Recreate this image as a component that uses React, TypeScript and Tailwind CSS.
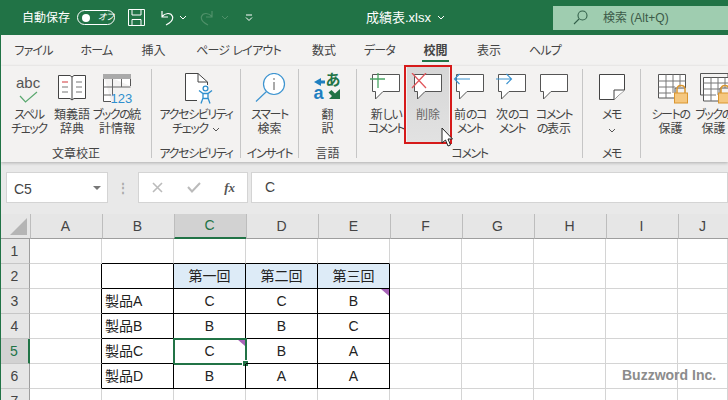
import type { ReactNode } from "react"

const uiFont = "[font-family:'Liberation_Sans','Noto_Sans_CJK_JP',sans-serif] [font-feature-settings:'palt']"

// カナだけ詰める（Meiryo UI の幅に寄せる）
function Label({ text, tight = "tracking-[-1.4px]" }: { text: string; tight?: string }) {
  return (
    <>
      {text.split(/([ァ-ヶーぁ-ん]+)/).map((part, i) =>
        i % 2 ? (
          <span key={i} className={tight}>
            {part}
          </span>
        ) : (
          part
        ),
      )}
    </>
  )
}

function Bubble({ children }: { children?: ReactNode }) {
  return (
    <svg width="36" height="32" viewBox="0 0 36 32" fill="none">
      <path d="M4.5 1.5H31.5V18.5H15L7.5 26V18.5H4.5Z" fill="#fff" stroke="#555" strokeWidth="1" />
      {children}
    </svg>
  )
}

const icons: Record<string, ReactNode> = {
  spell: (
    <div className="relative h-[32px] w-[36px]">
      <span className="absolute top-[-1px] left-[5px] text-[15px] text-[#555]">abc</span>
      <svg className="absolute top-[18px] left-[8px]" width="20" height="12" viewBox="0 0 20 12" fill="none">
        <path d="M1 5L6.5 11L18 1" stroke="#5aa86f" strokeWidth="1.2" />
      </svg>
    </div>
  ),
  book: (
    <svg width="32" height="32" viewBox="0 0 32 32" fill="none">
      <path d="M2.5 2.5H14L16 4L18 2.5H29.5V25.5H18L16 27L14 25.5H2.5Z" fill="#fff" stroke="#444" />
      <path d="M16 4V27" stroke="#444" />
      <path d="M6 9H12" stroke="#d13438" />
      <path d="M6 14H12M6 19H12M20 9H26M20 14H26M20 19H26" stroke="#777" />
    </svg>
  ),
  stats: (
    <svg width="32" height="32" viewBox="0 0 32 32" fill="none">
      <path d="M2.5 1.5H29.5V13M2.5 1.5V28.5H10" stroke="#555" fill="#fff" />
      <rect x="2" y="1" width="28" height="5" fill="#aaa" />
      <path d="M11.5 6V22M20.5 6V14M2.5 14H29.5M2.5 22H10" stroke="#666" />
      <text x="9.5" y="30" fontSize="13" fill="#2f8fce" fontFamily="Liberation Sans">123</text>
    </svg>
  ),
  access: (
    <svg width="36" height="32" viewBox="0 0 36 32" fill="none">
      <path d="M7.5 0.5H20L29.5 9V27.5H7.5Z" fill="#fff" />
      <path d="M29.5 12V9L20 0.5H7.5V27.5H19M20 0.5V9H29.5" stroke="#444" />
      <circle cx="27.5" cy="15.5" r="2.4" fill="#fff" stroke="#2f8fce" strokeWidth="1.3" />
      <path d="M21 17.5L25 20.5H30L34 17.5M25 20.5V25L23 30.5M30 20.5V25L32 30.5M25 25.5H30" stroke="#2f8fce" strokeWidth="1.3" />
    </svg>
  ),
  smart: (
    <svg width="36" height="32" viewBox="0 0 36 32" fill="none">
      <circle cx="22" cy="11" r="10.5" fill="#fff" stroke="#3d94d0" strokeWidth="1.2" />
      <path d="M14.5 18.5L4 28.5" stroke="#3d94d0" strokeWidth="1.2" />
      <path d="M22 9V17" stroke="#555" />
      <circle cx="22" cy="6" r="0.8" fill="#555" />
    </svg>
  ),
  translate: (
    <div className="relative h-[32px] w-[32px]">
      <span className="absolute top-[10px] left-[2px] text-[18px] leading-[20px] font-bold text-[#1f7fc0]">a</span>
      <span className="absolute top-[-3px] left-[14px] text-[15px] leading-[20px] font-bold text-[#217346]">あ</span>
      <svg className="absolute top-0 left-0" width="32" height="32" viewBox="0 0 32 32">
        <path d="M2 9L9 5V7.5H13V10.5H9V13Z" fill="#1f7fc0" />
        <path d="M28 26H17L20 23L16.5 19.5L19.5 17L23 20.5L28 16Z" fill="#217346" />
      </svg>
    </div>
  ),
  add: (
    <Bubble>
      <path d="M2 6H17M10 0V15" stroke="#4aa564" strokeWidth="1.3" />
    </Bubble>
  ),
  remove: (
    <Bubble>
      <path d="M2 0L16 15M16 0L2 15" stroke="#e0565b" strokeWidth="1.3" />
    </Bubble>
  ),
  prev: (
    <Bubble>
      <path d="M2 6H18M7.5 1L2.5 6L7.5 11" stroke="#3d94d0" strokeWidth="1.2" />
    </Bubble>
  ),
  next: (
    <Bubble>
      <path d="M2 6H18M12.5 1L17.5 6L12.5 11" stroke="#3d94d0" strokeWidth="1.2" />
    </Bubble>
  ),
  show: <Bubble />,
  memo: (
    <svg width="30" height="30" viewBox="0 0 30 30" fill="none">
      <path d="M2.5 1.5H27.5V17L17 26.5H2.5Z" fill="#fff" stroke="#444" />
      <path d="M27.5 17H17V26.5" stroke="#444" fill="#fff" />
    </svg>
  ),
  sheet: (
    <svg width="36" height="32" viewBox="0 0 36 32" fill="none">
      <g transform="translate(4 0)">
        <path d="M1.5 1.5H28.5V15H18V25H1.5Z" fill="#fff" stroke="#555" />
        <path d="M1.5 8H28.5M1.5 14H18M1.5 20H14M9 1.5V25M16 1.5V20M23 1.5V14" stroke="#777" />
      </g>
      <g transform="translate(4 2)">
        <path d="M20 18V14.5C20 9 28 9 28 14.5V18" stroke="#d9952f" strokeWidth="1.5" />
        <rect x="17.5" y="18" width="13" height="10" fill="#f5c77e" stroke="#d9952f" />
      </g>
    </svg>
  ),
  workbook: (
    <svg width="36" height="32" viewBox="0 0 36 32" fill="none">
      <g transform="translate(3 0)">
        <path d="M1.5 0.5H29V4M1.5 0.5V22H4" stroke="#555" />
        <path d="M4.5 4.5H31.5V15H21V28H4.5Z" fill="#fff" stroke="#555" />
        <path d="M4.5 10H31.5M4.5 16H21M4.5 22H17M12 4.5V28M19 4.5V22M26 4.5V15" stroke="#777" />
      </g>
      <g transform="translate(3 2)">
        <path d="M22 18V14.5C22 9 30 9 30 14.5V18" stroke="#d9952f" strokeWidth="1.5" />
        <rect x="19.5" y="18" width="13" height="10" fill="#f5c77e" stroke="#d9952f" />
      </g>
    </svg>
  ),
}

function RibbonButton({ icon, lines, width, active }: { icon: string; lines: ReactNode[]; width: string; active?: boolean }) {
  return (
    <div className={`flex h-[77px] flex-none flex-col items-center ${width} ${active ? "bg-gradient-to-b from-[#d6d6d6] to-[#e2e2e2]" : ""}`}>
      <div className="mt-[7px] flex h-[33px] items-start justify-center">{icons[icon]}</div>
      <div className={`mt-[2px] text-center text-[12px] leading-[14px] whitespace-nowrap ${active ? "text-[#666]" : "text-[#444]"}`}>
        {lines.map((l, i) => (
          <div key={i}>{typeof l === "string" ? <Label text={l} /> : l}</div>
        ))}
      </div>
    </div>
  )
}

function Group({ label, width, children }: { label: string; width: string; children: ReactNode }) {
  return (
    <div className={`flex h-[96px] flex-none flex-col ${width}`}>
      <div className="flex h-[77px] justify-center">{children}</div>
      <div className="mt-[4px] text-center text-[12px] leading-[14px] whitespace-nowrap text-[#444]">
        <Label text={label} />
      </div>
    </div>
  )
}

const Divider = () => <div className="mt-[3px] h-[89px] w-px flex-none bg-[#c6c6c6]" />

const Chevron = ({ color = "#555" }: { color?: string }) => (
  <svg width="8" height="5" viewBox="0 0 8 5" fill="none">
    <path d="M1 1L4 4L7 1" stroke={color} />
  </svg>
)

const tabs = [
  { name: "ファイル", w: "w-[65px]" },
  { name: "ホーム", w: "w-[61px]" },
  { name: "挿入", w: "w-[53px]" },
  { name: "ページ レイアウト", w: "w-[117px]" },
  { name: "数式", w: "w-[54px]" },
  { name: "データ", w: "w-[57px]" },
  { name: "校閲", w: "w-[55px]" },
  { name: "表示", w: "w-[52px]" },
  { name: "ヘルプ", w: "w-[60px]" },
]

function TitleBar() {
  return (
    <div className="flex h-[35px] items-center bg-[#217346] text-white">
      <span className="ml-[21px] w-[50px] text-[12px] whitespace-nowrap">自動保存</span>
      <div className="ml-[5px] flex h-[15px] w-[38px] items-center rounded-full border border-white pl-[4px]">
        <span className="h-[8px] w-[8px] rounded-full bg-white" />
        <span className="ml-[8px] text-[9px] italic">オフ</span>
      </div>
      <svg className="ml-[13px]" width="17" height="17" viewBox="0 0 17 17" fill="none" stroke="#fff">
        <path d="M0.5 0.5H16.5V16.5H0.5Z M4 0.5V6H13V0.5 M4 16.5V10.5H13V16.5" />
      </svg>
      <svg className="ml-[13px]" width="16" height="16" viewBox="0 0 16 16" fill="none" stroke="#fff" strokeWidth="1.2">
        <path d="M4 1V7H10M4 6.5C7 3 13 2 14.5 6.5C15.5 10 12 13 8 15" />
      </svg>
      <div className="ml-[5px]"><Chevron color="#fff" /></div>
      <svg className="ml-[13px]" width="16" height="16" viewBox="0 0 16 16" fill="none" stroke="#4f9069" strokeWidth="1.2">
        <path d="M12 1V7H6M12 6.5C9 3 3 2 1.5 6.5C0.5 10 4 13 8 15" />
      </svg>
      <div className="ml-[5px]"><Chevron color="#4f9069" /></div>
      <svg className="ml-[16px]" width="8" height="8" viewBox="0 0 8 8" fill="none" stroke="#fff">
        <path d="M1 1H7M1 3.5L4 6.5L7 3.5" />
      </svg>
      <span className="ml-[113px] text-[13px] whitespace-nowrap">成績表.xlsx</span>
      <div className="ml-[6px]"><Chevron color="#fff" /></div>
      <div className="ml-[108px] flex h-[24px] flex-1 items-center bg-[#9fcdb0] text-[#3c5a48]">
        <svg className="ml-[20px]" width="15" height="15" viewBox="0 0 15 15" fill="none" stroke="#33604a" strokeWidth="1.1">
          <circle cx="9.5" cy="5.5" r="4.5" />
          <path d="M6 9L1 14" />
        </svg>
        <span className="ml-[15px] text-[12px] whitespace-nowrap">検索 (Alt+Q)</span>
      </div>
    </div>
  )
}

function Tabs() {
  return (
    <div className="flex h-[31px] items-start bg-[#f3f2f1] pt-[8px] text-[12px] text-[#444]">
      {tabs.map((t) => (
        <div key={t.name} className={`flex flex-none flex-col items-center ${t.w}`}>
          <span className={`leading-[16px] whitespace-pre ${t.name === "校閲" ? "font-bold" : ""}`}>
            <Label text={t.name} tight="tracking-[-0.8px]" />
          </span>
          {t.name === "校閲" && <span className="mt-[1px] h-[2px] w-[27px] bg-[#217346]" />}
        </div>
      ))}
    </div>
  )
}

function Ribbon() {
  return (
    <div className="relative flex h-[96px] items-start overflow-hidden bg-[#f3f2f1] shadow-[0_1px_3px_rgba(0,0,0,0.25)]">
      <Group label="文章校正" width="w-[150px]">
        <div className="flex w-full pl-[7px]">
          <RibbonButton icon="spell" lines={["スペル", "チェック"]} width="w-[42px]" />
          <RibbonButton icon="book" lines={["類義語", "辞典"]} width="w-[44px]" />
          <RibbonButton icon="stats" lines={["ブックの統", "計情報"]} width="w-[46px]" />
        </div>
      </Group>
      <Divider />
      <Group label="アクセシビリティ" width="w-[88px]">
        <RibbonButton
          icon="access"
          lines={[
            "アクセシビリティ",
            <span className="inline-flex items-center gap-[4px]">
              <Label text="チェック" />
              <Chevron />
            </span>,
          ]}
          width="w-[88px]"
        />
      </Group>
      <Divider />
      <Group label="インサイト" width="w-[57px]">
        <RibbonButton icon="smart" lines={["スマート", "検索"]} width="w-[57px]" />
      </Group>
      <Divider />
      <Group label="言語" width="w-[57px]">
        <RibbonButton icon="translate" lines={["翻", "訳"]} width="w-[57px]" />
      </Group>
      <Divider />
      <Group label="コメント" width="w-[225px]">
        <div className="flex w-full pl-[8px]">
          <RibbonButton icon="add" lines={["新しい", "コメント"]} width="w-[42px]" />
          <RibbonButton icon="remove" lines={["削除"]} width="w-[42px]" active />
          <RibbonButton icon="prev" lines={["前のコ", "メント"]} width="w-[42px]" />
          <RibbonButton icon="next" lines={["次のコ", "メント"]} width="w-[42px]" />
          <RibbonButton icon="show" lines={["コメント", "の表示"]} width="w-[42px]" />
        </div>
      </Group>
      <Divider />
      <Group label="メモ" width="w-[57px]">
        <RibbonButton icon="memo" lines={["メモ", <span className="inline-flex"><Chevron /></span>]} width="w-[57px]" />
      </Group>
      <Divider />
      <div className="flex flex-none pl-[8px]">
        <RibbonButton icon="sheet" lines={["シートの", "保護"]} width="w-[43px]" />
        <RibbonButton icon="workbook" lines={["ブックの", "保護"]} width="w-[43px]" />
      </div>
    </div>
  )
}

function FormulaBar() {
  return (
    <div className="flex h-[52px] items-start bg-[#e9e9e9] pt-[10px]">
      <div className="ml-[5px] flex h-[31px] w-[102px] flex-none items-center justify-between border border-[#d4d4d4] bg-white pr-[6px] pl-[7px] text-[14px] text-[#444]">
        <span className="mt-[3px]">C5</span>
        <span className="h-0 w-0 border-x-[4px] border-t-[4px] border-x-transparent border-t-[#777]" />
      </div>
      <div className="flex h-[31px] w-[30px] flex-none items-center justify-center text-[12px] leading-none font-bold text-[#aaa]">⋮</div>
      <div className="flex h-[31px] w-[110px] flex-none items-center justify-between border border-[#d4d4d4] bg-white pr-[12px] pl-[13px]">
        <svg width="11" height="11" viewBox="0 0 11 11" fill="none" stroke="#bbb" strokeWidth="1.6"><path d="M1 1L10 10M10 1L1 10" /></svg>
        <svg width="14" height="11" viewBox="0 0 14 11" fill="none" stroke="#bbb" strokeWidth="2"><path d="M1 5L5 9.5L13 1" /></svg>
        <span className="[font-family:'Liberation_Serif',serif] text-[13px] font-bold text-[#555] italic">fx</span>
      </div>
      <div className="ml-[3px] flex h-[31px] flex-1 items-center border border-[#d4d4d4] bg-white pl-[13px] text-[14px] text-[#444]">C</div>
    </div>
  )
}

const columns = ["A", "B", "C", "D", "E", "F", "G", "H", "I", "J"]
const cells: Record<string, string> = {
  C2: "第一回", D2: "第二回", E2: "第三回",
  B3: "製品A", C3: "C", D3: "C", E3: "B",
  B4: "製品B", C4: "B", D4: "B", E4: "C",
  B5: "製品C", C5: "C", D5: "B", E5: "A",
  B6: "製品D", C6: "B", D6: "A", E6: "A",
}

function Note() {
  return (
    <svg className="absolute top-0 right-0" width="8" height="7" viewBox="0 0 8 7">
      <path d="M0 0H8V7Z" fill="#a864b8" />
    </svg>
  )
}

function Sheet() {
  const rows = [1, 2, 3, 4, 5, 6, 7]
  return (
    <div className="relative grid grid-cols-[29px_repeat(9,72px)_1fr] grid-rows-[25px_repeat(7,25px)] bg-white text-[14px] text-[#222]">
      <div className="relative border-b border-[#9e9e9e] bg-[#e6e6e6]">
        <svg className="absolute top-[4px] right-[3px]" width="17" height="17" viewBox="0 0 17 17">
          <path d="M17 0V17H0Z" fill="#b5b5b5" />
        </svg>
      </div>
      {columns.map((c) => (
        <div
          key={c}
          className={`flex items-center justify-center border-l border-[#bdbdbd] pr-[2px] ${
            c === "C" ? "border-b-2 border-b-[#217346] bg-[#d2d2d2] text-[#217346]" : "border-b border-b-[#9e9e9e] bg-[#e6e6e6] text-[#444]"
          }`}
        >
          {c}
        </div>
      ))}
      {rows.map((r) => (
        <div key={r} className="contents">
          <div
            className={`flex items-center justify-center border-b border-[#c6c6c6] pr-[1px] ${
              r === 5 ? "border-r-2 border-r-[#217346] bg-[#d2d2d2] text-[#217346]" : "border-r border-r-[#9e9e9e] bg-[#e6e6e6] text-[#444]"
            }`}
          >
            {r}
          </div>
          {columns.map((c, i) => {
            const key = `${c}${r}`
            const rightBlack = r >= 2 && r <= 6 && i <= 4
            const bottomBlack = r <= 6 && i >= 1 && i <= 4
            const isHead = r === 2 && i >= 2 && i <= 4
            return (
              <div
                key={key}
                className={`relative flex items-center whitespace-nowrap ${i === 1 ? "justify-start pl-[3px]" : "justify-center"} ${
                  rightBlack ? "border-r border-r-black" : "border-r border-r-[#d4d4d4]"
                } ${bottomBlack ? "border-b border-b-black" : "border-b border-b-[#d4d4d4]"} ${isHead ? "bg-[#ddebf7]" : ""}`}
              >
                {cells[key]}
                {key === "E3" && <Note />}
                {key === "C5" && (
                  <>
                    <Note />
                    <div className="absolute -top-px -left-px h-[27px] w-[74px] border-2 border-[#217346]" />
                    <div className="absolute -right-[4px] -bottom-[4px] h-[7px] w-[7px] border border-white bg-[#217346]" />
                  </>
                )}
              </div>
            )
          })}
        </div>
      ))}
      <span className="absolute top-[151px] left-[621px] text-[14px] font-bold text-[#8c8c8c]">Buzzword Inc.</span>
    </div>
  )
}

export default function App() {
  return (
    <div className={`relative h-[400px] w-[728px] overflow-hidden border-l border-[#217346] bg-[#e9e9e9] ${uiFont}`}>
      <TitleBar />
      <Tabs />
      <Ribbon />
      <FormulaBar />
      <Sheet />
      {/* 赤枠とカーソルはスクショの注釈 */}
      <div className="absolute top-[65px] left-[403px] h-[79px] w-[48px] border-[2px] border-[#d61a1a]" />
      <svg className="absolute top-[127px] left-[440px]" width="13" height="21" viewBox="0 0 13 21">
        <path d="M1 1V16L4.5 13L7 19L9.5 18L7 12H11.5Z" fill="#fff" stroke="#222" strokeWidth="1" />
      </svg>
    </div>
  )
}
